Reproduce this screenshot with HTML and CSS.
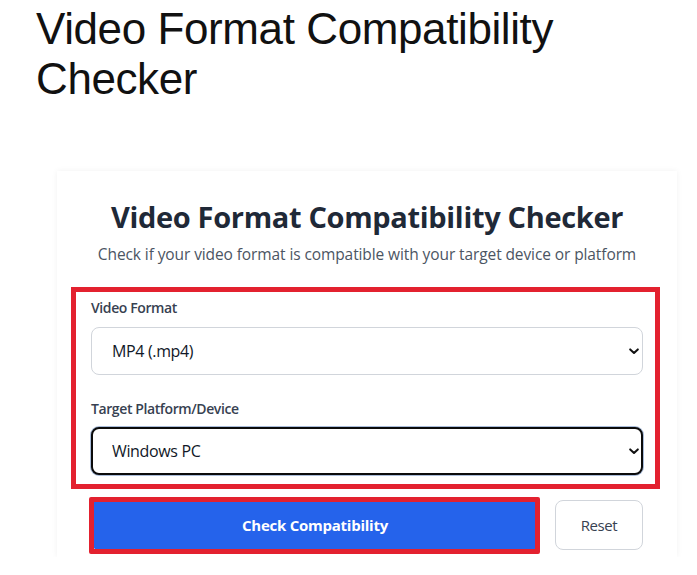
FILE: index.html
```html
<!DOCTYPE html>
<html lang="en">
<head>
<meta charset="utf-8">
<title>Video Format Compatibility Checker</title>
<link rel="stylesheet" href="styles.css">
</head>
<body>
<h1 class="page-title">Video Format Compatibility Checker</h1>
<div class="card">
  <h2 class="card-title">Video Format Compatibility Checker</h2>
  <p class="card-subtitle">Check if your video format is compatible with your target device or platform</p>
  <div class="fields annotated">
    <label class="field-label" for="format">Video Format</label>
    <div class="select-wrap">
      <select id="format" class="select">
        <option>MP4 (.mp4)</option>
      </select>
      <svg class="chevron" width="10" height="7" viewBox="0 0 10 7"><path d="M1.2 1.4 L5 5 L8.8 1.4" fill="none" stroke="#111" stroke-width="2" stroke-linecap="round" stroke-linejoin="round"/></svg>
    </div>
    <label class="field-label second" for="platform">Target Platform/Device</label>
    <div class="select-wrap">
      <select id="platform" class="select focused">
        <option>Windows PC</option>
      </select>
      <svg class="chevron" width="10" height="7" viewBox="0 0 10 7"><path d="M1.2 1.4 L5 5 L8.8 1.4" fill="none" stroke="#111" stroke-width="2" stroke-linecap="round" stroke-linejoin="round"/></svg>
    </div>
  </div>
  <div class="actions">
    <button class="btn-primary annotated-btn">Check Compatibility</button>
    <button class="btn-secondary">Reset</button>
  </div>
</div>
</body>
</html>
```

FILE: styles.css
```css
* { box-sizing: border-box; }

html, body {
  margin: 0;
  padding: 0;
  background: #ffffff;
}

body {
  font-family: "Open Sans", "Noto Sans", sans-serif;
  color: #111827;
}

.page-title {
  margin: 0;
  padding: 4px 0 0 36px;
  font-family: "Liberation Sans", Arial, sans-serif;
  font-weight: 400;
  font-size: 44px;
  line-height: 50px;
  letter-spacing: -0.4px;
  color: #111111;
}

.card {
  margin: 67px 0 0 57px;
  width: 620px;
  padding: 28px 34px 7px 34px;
  background: #ffffff;
  box-shadow: 0 0 6px rgba(0, 0, 0, 0.06);
}

.card-title {
  margin: 0 0 7px 0;
  text-align: center;
  font-size: 29px;
  line-height: 36px;
  font-weight: 700;
  letter-spacing: -0.33px;
  color: #1f2937;
}

.card-subtitle {
  margin: 0 0 32px 0;
  text-align: center;
  font-size: 15.5px;
  line-height: 24px;
  letter-spacing: -0.1px;
  color: #4b5563;
  white-space: nowrap;
}

.fields {
  display: flex;
  flex-direction: column;
}

.annotated {
  position: relative;
}

.annotated::after {
  content: "";
  position: absolute;
  top: -11px;
  left: -20px;
  right: -17px;
  bottom: -14px;
  border: 5px solid #e3212f;
  pointer-events: none;
}

.field-label {
  display: block;
  font-size: 14px;
  line-height: 20px;
  font-weight: 600;
  letter-spacing: -0.4px;
  color: #374151;
  margin-bottom: 9px;
}

.field-label.second {
  margin-top: 24px;
  margin-bottom: 8px;
}

.select-wrap {
  position: relative;
}

.select {
  display: block;
  width: 100%;
  height: 48px;
  -webkit-appearance: none;
  appearance: none;
  background: #ffffff;
  border: 1px solid #d1d5db;
  border-radius: 8px;
  padding: 0 30px 0 20px;
  font-family: "Open Sans", "Noto Sans", sans-serif;
  font-size: 16px;
  letter-spacing: -0.35px;
  color: #111827;
  outline: none;
}

.select.focused {
  border: 2px solid #0b0b0b;
  padding-left: 19px;
  box-shadow: 0 0 0 1px #a9bcd9;
}

.chevron {
  position: absolute;
  right: 4px;
  top: 50%;
  margin-top: -3px;
  pointer-events: none;
}

.actions {
  display: flex;
  gap: 16px;
  margin-top: 25px;
}

.btn-primary,
.btn-secondary {
  height: 50px;
  border-radius: 8px;
  font-family: "Open Sans", "Noto Sans", sans-serif;
  font-size: 15px;
  cursor: pointer;
}

.btn-primary {
  flex: 1;
  background: #2563eb;
  color: #ffffff;
  font-weight: 700;
  letter-spacing: -0.25px;
  border: none;
}

.annotated-btn {
  position: relative;
}

.annotated-btn::after {
  content: "";
  position: absolute;
  top: -3px;
  left: -2px;
  right: -1px;
  bottom: -4px;
  border: 5px solid #e3212f;
  border-radius: 2px;
  pointer-events: none;
}

.btn-secondary {
  width: 88px;
  background: #ffffff;
  border: 1px solid #d1d5db;
  color: #374151;
  font-weight: 400;
  letter-spacing: -0.4px;
}
```
